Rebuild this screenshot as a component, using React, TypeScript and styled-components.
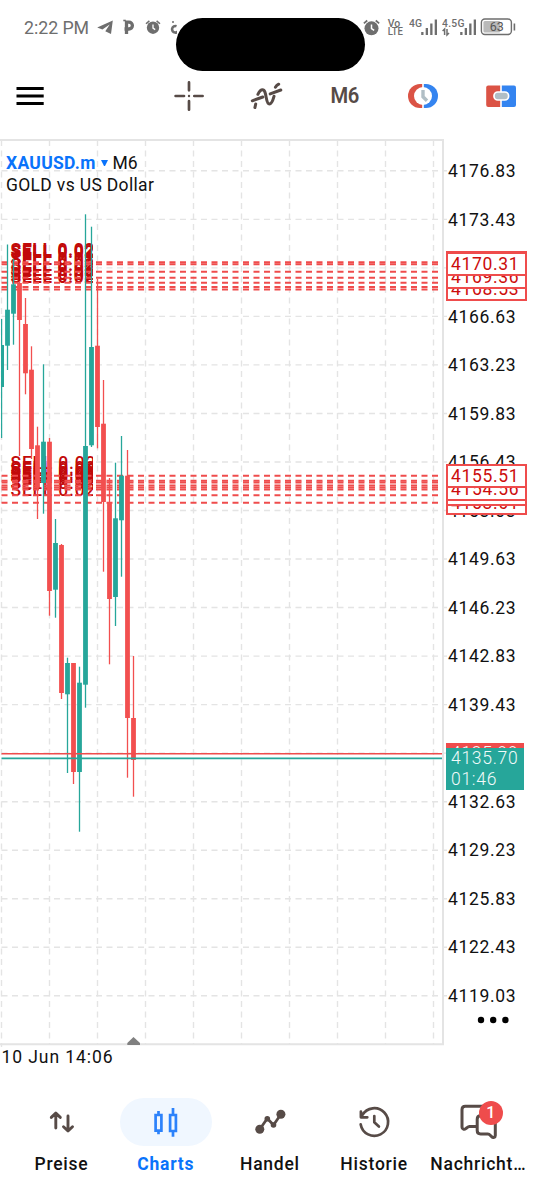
import React from 'react';
import styled, { createGlobalStyle } from 'styled-components';

const INK = '#574b47';
const RED = '#ef4c4c';
const GREEN = '#26a69a';
const BLUE = '#0a73fb';
const GRID = '#e4e4e4';
const STATUS = '#6e6e6e';

const GlobalStyle = createGlobalStyle`
  * { box-sizing: border-box; }
  body { margin: 0; background: #fff; font-family: Roboto, "Liberation Sans", sans-serif; color: #111; }
  svg { display: block; flex: none; }
`;

const Screen = styled.div`
  width: 540px;
  height: 1200px;
  overflow: hidden;
  background: #fff;
  display: flex;
  flex-direction: column;
`;

const StatusBar = styled.header`
  position: relative;
  height: 70px;
  padding: 17px 24px 0 24px;
  display: flex;
  justify-content: space-between;
  align-items: flex-start;
  color: ${STATUS};
`;

const StatusGroup = styled.div`
  display: flex;
  align-items: center;
  height: 20px;
`;

const Clock = styled.span`
  width: 73px;
  padding-top: 2px;
  font-size: 17.8px;
  line-height: 20px;
  letter-spacing: -0.05px;
  white-space: nowrap;
`;

const Cutout = styled.div`
  position: absolute;
  left: 175.5px;
  top: 18px;
  width: 189px;
  height: 52.5px;
  border-radius: 27px;
  background: #000;
`;

const Toolbar = styled.nav`
  height: 69px;
  padding: 0 23px 17px 15px;
  display: flex;
  align-items: center;
`;

const ToolButton = styled.button<{ $width: number; $ml?: number }>`
  width: ${p => p.$width}px;
  height: 40px;
  margin-left: ${p => p.$ml ?? 0}px;
  padding: 0;
  border: 0;
  background: none;
  display: flex;
  align-items: center;
  justify-content: center;
  color: ${INK};
  font: 600 21.5px/40px Roboto, sans-serif;
  letter-spacing: -1.1px;
`;

const Timeframe = styled.span`
  transform: translateX(-0.5px) scaleX(0.94);
  letter-spacing: -0.4px;
`;

const ChartArea = styled.main`
  position: relative;
  height: 908px;
  display: flex;
`;

const ChartTitle = styled.div`
  position: absolute;
  left: 6px;
  top: 13px;
  font-size: 17.5px;
  line-height: 22px;
  letter-spacing: 0.33px;
  white-space: nowrap;
`;

const SymbolRow = styled.div`
  display: flex;
  align-items: center;
  letter-spacing: 0;
`;

const SymbolName = styled.span`
  width: 94.5px;
  font-weight: 700;
  letter-spacing: 0.3px;
  color: ${BLUE};
`;

const Caret = styled.span`
  width: 7px;
  height: 0;
  margin-right: 5px;
  border: 3.5px solid transparent;
  border-top: 6px solid ${BLUE};
  border-bottom: 0;
`;

const PriceAxis = styled.aside`
  position: relative;
  width: 92px;
  padding-top: 8px;
`;

const PriceLabel = styled.div`
  height: 48.53px;
  line-height: 48.53px;
  font-size: 17.5px;
  letter-spacing: 0.68px;
  white-space: nowrap;
`;

const MoreDots = styled.svg`
  margin: -6px 0 0 29.3px;
`;

const OrderTag = styled.div<{ $center: number }>`
  position: absolute;
  left: -2px;
  top: ${p => p.$center - 139 - 12}px;
  width: 81px;
  height: 24px;
  padding-left: 3px;
  border: 2px solid ${RED};
  background: #fff;
  color: #cc0c0c;
  font-size: 17.5px;
  line-height: 21px;
  letter-spacing: 0.68px;
  white-space: nowrap;
`;

const QuoteTag = styled.div<{ $top: number; $color: string }>`
  position: absolute;
  left: -2px;
  top: ${p => p.$top - 139}px;
  width: 78px;
  padding-left: 5px;
  background: ${p => p.$color};
  color: #f2fbfa;
  font-size: 17.5px;
  font-weight: 300;
  line-height: 21px;
  letter-spacing: 0.72px;
  white-space: nowrap;
`;

const TimeAxis = styled.div`
  height: 43px;
  padding-left: 1.5px;
  font-size: 17.5px;
  line-height: 21px;
  letter-spacing: 0.92px;
`;

const TabBar = styled.nav`
  height: 110px;
  padding: 8px 9px 0 10px;
  display: flex;
`;

const Tab = styled.a<{ $active?: boolean }>`
  flex: 1 1 0;
  min-width: 0;
  display: flex;
  flex-direction: column;
  align-items: center;
  gap: 7px;
  font-size: 17.5px;
  font-weight: ${p => (p.$active ? 700 : 500)};
  line-height: 22px;
  letter-spacing: 0.75px;
  white-space: nowrap;
  color: ${p => (p.$active ? BLUE : '#111')};
`;

const TabLabel = styled.span`
  transform: translateX(-0.6px);
`;

const TabIcon = styled.span<{ $active?: boolean }>`
  position: relative;
  width: 92px;
  height: 48px;
  border-radius: 24px;
  background: ${p => (p.$active ? '#f0f7ff' : 'transparent')};
`;

const Badge = styled.span`
  position: absolute;
  left: 46px;
  top: 3px;
  width: 24px;
  height: 24px;
  border-radius: 50%;
  background: ${RED};
  color: #fff;
  font-size: 16px;
  font-weight: 500;
  line-height: 24px;
  letter-spacing: 0;
  text-align: center;
`;

const AlarmIcon = ({ size }: { size: number }) => (
  <svg width={size} height={size} viewBox="0 0 16 16">
    <circle cx="8" cy="8.8" r="6.6" fill={STATUS} />
    <path d="M.8 4.2 4 1.4M15.2 4.2 12 1.4" stroke={STATUS} strokeWidth="1.6" />
    <path d="M8 5.2v3.8l2.5 1.8" fill="none" stroke="#fff" strokeWidth="1.4" />
  </svg>
);

const Signal = ({ label, width, data }: { label: string; width: number; data?: boolean }) => (
  <svg width={width} height="20" viewBox={`0 0 ${width} 20`} fill={STATUS}>
    <text x="0" y="10" fontSize="10.3" fontWeight="500" fontFamily="Roboto" textLength={data ? 22.5 : 13}>{label}</text>
    {data && <path d="M.6 14 2.6 12v6M5 12v6l2-2" fill="none" stroke={STATUS} strokeWidth="1.5" />}
    {[3, 7, 11.5, 15.5].map((h, i) => (
      <rect key={h} x={width - 15.8 + i * 4.5} y={18 - h} width="2.3" height={h} />
    ))}
  </svg>
);

// x, high, low, body top, body bottom, rising
type Candle = [number, number, number, number, number, boolean];
const candles: Candle[] = [
  [7.5, 244.5, 370, 309.7, 345.7, true],
  [13.5, 259, 344.7, 284.3, 313.7, true],
  [19.5, 281, 456, 283, 320, false],
  [25.5, 298, 394.3, 324, 373.3, false],
  [31.5, 346.3, 459, 369.7, 449, false],
  [37.5, 426.7, 519, 445.3, 487, false],
  [43.5, 364.3, 513.7, 441.7, 483, true],
  [49.5, 438, 615.7, 441.7, 591, false],
  [55.5, 519, 617.7, 543, 589.7, true],
  [61.5, 544, 699, 545, 693, false],
  [67.5, 657.7, 773, 663, 694.3, true],
  [73.5, 663, 784, 663, 772, false],
  [79.5, 666.7, 831.7, 682.7, 772, true],
  [85.5, 214.3, 707.7, 446, 684.7, true],
  [91.5, 226.7, 447, 347, 445.3, true],
  [97.5, 279, 448.3, 345.7, 427, false],
  [103.5, 380, 571.7, 423.7, 502, false],
  [109.5, 478, 664.3, 502, 599, false],
  [115.5, 462.7, 626, 518.3, 597, true],
  [121.5, 436, 576.7, 475.7, 520.3, true],
  [127.5, 450, 777.7, 475.7, 718, false],
  [133.5, 656, 796.7, 718, 760, false],
];

const orderLevels = [262.3, 264.3, 271.8, 277.7, 282.8, 287, 289.5, 475.7, 480.8, 482.6, 485.6, 487.6, 489.6, 495.3, 502.7];

const prices = ['4176.83', '4173.43', '4170.03', '4166.63', '4163.23', '4159.83', '4156.43', '4153.03', '4149.63',
  '4146.23', '4142.83', '4139.43', '4136.03', '4132.63', '4129.23', '4125.83', '4122.43', '4119.03'];

const orderTags: [number, string][] = [
  [289.2, '4168.53'], [277.3, '4169.36'], [262.6, '4170.41'], [264, '4170.31'],
  [502.7, '4153.61'], [494, '4154.14'], [488.6, '4154.56'], [475.6, '4155.51'],
];

const PricePlot = () => (
  <svg width="448" height="908" viewBox="0 139 448 908">
    <defs>
      <clipPath id="labels"><rect x="0" y="139" width="93" height="908" /></clipPath>
    </defs>
    <g stroke={GRID} strokeWidth="1.4" strokeDasharray="6 4.5">
      {prices.map((p, i) => <path key={p} d={`M1.5 ${170.8 + i * 48.53}H447`} />)}
      {Array.from({ length: 10 }, (_, i) => <path key={i} d={`M${1.5 + i * 48} 140V${i ? 1044 : 1047}`} />)}
    </g>
    <path d="M0 139.9H443V1044.3H0" fill="none" stroke={GRID} strokeWidth="2" />
    <g clipPath="url(#labels)" fill="#c20a0a" fontFamily="Roboto" fontSize="17.5">
      {orderLevels.map(y => (
        <text key={y} x="10.5" y={y - 6.7} fontWeight={y < 300 ? 700 : 500} letterSpacing={y < 300 ? 0.6 : 0.8}>SELL 0.02</text>
      ))}
    </g>
    <g stroke={RED} strokeWidth="2" strokeDasharray="6 4.5">
      {orderLevels.map(y => <path key={y} d={`M1.5 ${y}H438`} />)}
    </g>
    <rect x="1" y="319" width="1.2" height="119" fill={GREEN} />
    <rect x="1" y="345" width="3" height="42" fill={GREEN} />
    {candles.map(([x, high, low, top, bottom, up]) => (
      <g key={x} fill={up ? GREEN : '#f24f4f'}>
        <rect x={x - 0.65} y={high} width="1.3" height={low - high} />
        <rect x={x - 2.4} y={top} width="4.8" height={bottom - top} />
      </g>
    ))}
    <path d="M1.5 753.7H442" stroke={RED} strokeWidth="1.6" />
    <path d="M1.5 758.4H442" stroke={GREEN} strokeWidth="1.6" />
    <path d="M127.3 1045v-2l6.2-6 6.5 6v2z" fill="#808080" />
  </svg>
);

const tabs = [
  {
    label: 'Preise',
    icon: (
      <svg width="92" height="48" viewBox="15.5 1098 92 48" fill="none" stroke={INK} strokeWidth="2.9" strokeLinecap="round" strokeLinejoin="round">
        <path d="M55.3 1128V1113.2M50.8 1117.4l4.5-4.3 4.5 4.3M67.5 1116v14.8M63 1126.7l4.5 4.3 4.5-4.3" />
      </svg>
    ),
  },
  {
    label: 'Charts',
    icon: (
      <svg width="92" height="48" viewBox="120 1098 92 48" fill="none" stroke="#2c82fb" strokeWidth="2.7">
        <path d="M155.6 1115h5.8v15.6h-5.8zM158.5 1111v4M158.5 1130.6v3.6M170.1 1115h5.8v16h-5.8zM173 1108v7M173 1131v5.8" />
      </svg>
    ),
  },
  {
    label: 'Handel',
    icon: (
      <svg width="92" height="48" viewBox="224.5 1098 92 48" fill={INK}>
        <path d="M259.3 1129.3 266.8 1118.5 273 1125 280.4 1114.3" fill="none" stroke={INK} strokeWidth="2.7" />
        <circle cx="259.3" cy="1129.3" r="4.5" />
        <circle cx="280.4" cy="1114.3" r="4.5" />
        <circle cx="266.8" cy="1118.8" r="2.8" />
        <circle cx="273" cy="1125" r="2.8" />
      </svg>
    ),
  },
  {
    label: 'Historie',
    icon: (
      <svg width="92" height="48" viewBox="328.7 1098 92 48" fill="none" stroke={INK} strokeWidth="2.7" strokeLinecap="round" strokeLinejoin="round">
        <path d="M360.4 1124.4A13.8 13.8 0 1 0 362 1115.2M360.6 1111.6v5.7h6.4M374 1116v6.2l4.6 4.4" />
      </svg>
    ),
  },
  {
    label: 'Nachricht…',
    badge: 1,
    icon: (
      <svg width="92" height="48" viewBox="432.9 1098 92 48" fill="none" stroke={INK} strokeWidth="3" strokeLinecap="round" strokeLinejoin="round">
        <path d="M475.6 1126.6h-6.2c-1.4 0-2.5 1.2-3.6 2-1.6 1.2-3.9.7-3.9-1.4V1109.5q0-3.3 3.3-3.3H492" />
        <path d="M495.2 1120v15.4c0 2-2.2 2.7-3.7 1.2-1.3-1.2-2-2.6-3.8-2.6h-7.2q-3.4 0-3.4-3.4v-11.4q0-3.4 3.4-3.4h8" />
      </svg>
    ),
  },
];

export default function App() {
  return (
    <Screen>
      <GlobalStyle />
      <StatusBar>
        <StatusGroup>
          <Clock>2:22 PM</Clock>
          <svg width="80" height="20" viewBox="97 17 80 20" fill={STATUS}>
            <path d="M97.2 27.6 112.8 20.5 111 34 105.3 31.2 109.7 24.6 102.4 29.6z" />
            <path d="M123.3 20.5h2.5" stroke={STATUS} strokeWidth="1.6" />
            <path d="M126.5 34V22.2H129a3.4 3.4 0 0 1 0 6.8h-4.5" fill="none" stroke={STATUS} strokeWidth="3.3" />
            <circle cx="153" cy="27.7" r="6.2" />
            <path d="M146 23.8l3.4-2.9M160 23.8l-3.4-2.9" stroke={STATUS} strokeWidth="1.5" />
            <path d="M153 24.5v3.6l2.2 1.5" fill="none" stroke="#fff" strokeWidth="1.3" />
            <path d="M176.5 26.2a3.3 3.3 0 1 0 2.2 3.2V20.5c.6 2.6 2.4 3.6 5 3.8" fill="none" stroke={STATUS} strokeWidth="2.6" />
            <circle cx="173" cy="22" r="1" />
          </svg>
        </StatusGroup>
        <StatusGroup>
          <AlarmIcon size={17} />
          <svg width="29" height="20" viewBox="0 0 29 20" fill={STATUS} fontFamily="Roboto" fontSize="10.5" fontWeight="500">
            <text x="7.8" y="9.5">Vo</text>
            <text x="7.8" y="18.2" textLength="15.2" lengthAdjust="spacingAndGlyphs">LTE</text>
          </svg>
          <Signal label="4G" width={28} />
          <svg width="5" height="20" />
          <Signal label="4.5G" width={34} data />
          <svg width="40" height="20" viewBox="476.6 17 40 20">
            <rect x="482" y="19" width="30" height="15.5" rx="3.5" fill="none" stroke={STATUS} strokeWidth="1.4" />
            <rect x="484" y="21" width="17" height="11.5" rx="1.5" fill="#b9b9b9" />
            <rect x="514.2" y="23.5" width="1.6" height="7" fill={STATUS} />
            <text x="490.3" y="31.3" fontSize="12.5" fontFamily="Roboto" fill="#555">63</text>
          </svg>
        </StatusGroup>
        <Cutout />
      </StatusBar>

      <Toolbar>
        <ToolButton $width={30} aria-label="Menu">
          <svg width="30" height="20" viewBox="15 86 30 20" stroke="#000" strokeWidth="2.8">
            <path d="M16.5 88.5H43.7M16.5 96H43.7M16.5 103.5H43.7" />
          </svg>
        </ToolButton>
        <ToolButton $width={32} $ml={128} aria-label="Crosshair">
          <svg width="32" height="32" viewBox="173 80 32 32" stroke={INK} strokeWidth="2.7" strokeLinecap="round">
            <path d="M175.6 96H184M194.3 96H202.6M189 82.4V90.3M189 101.2V109.7" />
            <circle cx="189" cy="96" r="1.2" fill={INK} stroke="none" />
          </svg>
        </ToolButton>
        <ToolButton $width={34} $ml={44} aria-label="Indicators">
          <svg width="34" height="32" viewBox="249 80 34 32" fill="none" stroke={INK} strokeWidth="3" strokeLinecap="round">
            <path d="M252.3 100.8 262.8 97M270.2 93.9 280.8 90" />
            <path d="M255.7 104 254.9 107.6M257.9 94.3C259.4 91.3 260.7 89.8 262.5 89.8 267 89.8 265.3 104 269.4 104 272 104 273 100 274 96.3M275.4 87.2Q276.6 85.2 278.7 84.2" />
          </svg>
        </ToolButton>
        <ToolButton $width={40} $ml={42}><Timeframe>M6</Timeframe></ToolButton>
        <ToolButton $width={32} $ml={42} aria-label="History">
          <svg width="32" height="30" viewBox="407 81 32 30">
            <path d="M422.2 84H420a12 12 0 0 0 0 24h2.2z" fill="#db5345" />
            <path d="M423.8 84H426a12 12 0 0 1 0 24h-2.2z" fill="#3484f0" />
            <circle cx="423" cy="96" r="9" fill="#fff" />
            <path d="M423 90v6.8l4 4" fill="none" stroke="#b0bec5" strokeWidth="3.4" />
          </svg>
        </ToolButton>
        <ToolButton $width={32} $ml={46} aria-label="Trade">
          <svg width="32" height="30" viewBox="485 81 32 30">
            <path d="M500.2 85.5H488.2q-2 0-2 2v17.4q0 2 2 2h12z" fill="#db5345" />
            <path d="M501.8 85.5H514q2 0 2 2v17.4q0 2-2 2h-12.2z" fill="#3484f0" />
            <rect x="494" y="92" width="14.6" height="8" rx="3.8" fill="#b0bec5" stroke="#fff" strokeWidth="1.7" />
          </svg>
        </ToolButton>
      </Toolbar>

      <ChartArea>
        <PricePlot />
        <ChartTitle>
          <SymbolRow>
            <SymbolName>XAUUSD.m</SymbolName>
            <Caret />
            M6
          </SymbolRow>
          <div>GOLD vs US Dollar</div>
        </ChartTitle>
        <PriceAxis>
          {prices.map(p => <PriceLabel key={p}>{p}</PriceLabel>)}
          <MoreDots width="32" height="12" viewBox="0 0 32 12">
            <circle cx="4" cy="6" r="3.2" /><circle cx="16.2" cy="6" r="3.2" /><circle cx="28.4" cy="6" r="3.2" />
          </MoreDots>
          {orderTags.map(([center, price]) => <OrderTag key={price} $center={center}>{price}</OrderTag>)}
          <QuoteTag $top={743.4} $color={RED}>4135.99</QuoteTag>
          <QuoteTag $top={747.7} $color={GREEN}>
            <div>4135.70</div>
            <div>01:46</div>
          </QuoteTag>
        </PriceAxis>
      </ChartArea>
      <TimeAxis>10 Jun 14:06</TimeAxis>

      <TabBar>
        {tabs.map(t => (
          <Tab key={t.label} $active={t.label === 'Charts'}>
            <TabIcon $active={t.label === 'Charts'}>
              {t.icon}
              {t.badge && <Badge>{t.badge}</Badge>}
            </TabIcon>
            <TabLabel>{t.label}</TabLabel>
          </Tab>
        ))}
      </TabBar>
    </Screen>
  );
}
